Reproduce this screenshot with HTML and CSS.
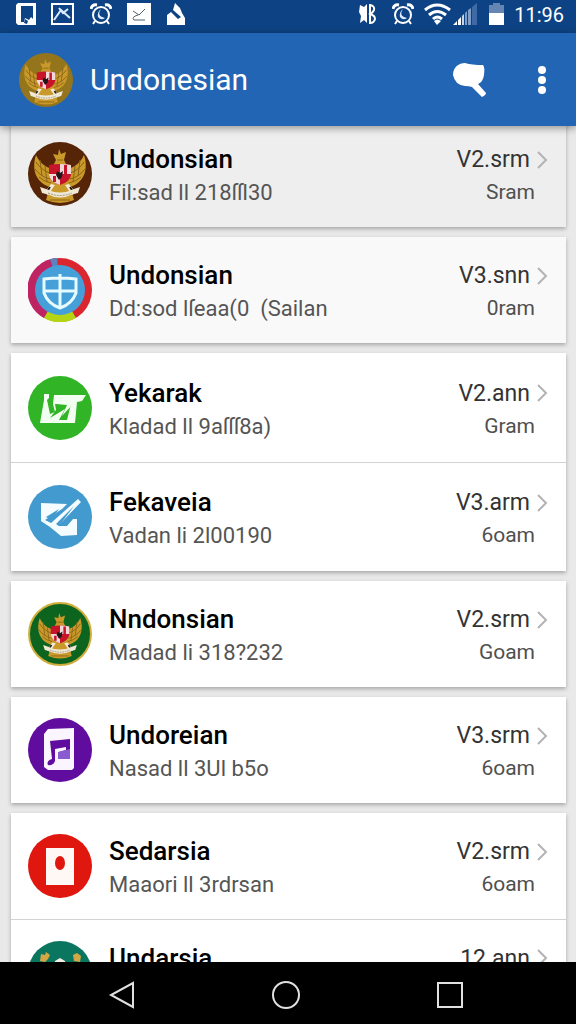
FILE: index.html
```html
<!DOCTYPE html>
<html lang="en">
<head>
  <meta charset="UTF-8">
  <meta name="viewport" content="width=device-width, initial-scale=1.0">
  <title>Undonesian</title>
  <link rel="stylesheet" href="styles.css">
</head>
<body>

  <!-- Shared icon shapes -->
  <svg class="defs" aria-hidden="true">
    <symbol id="garuda" viewBox="0 0 64 64">
      <g fill="#c9992a">
        <path d="M8 13C4 25 6 40 22 45L26 38L24 27C17 25 11 20 8 13Z"/>
        <path d="M56 13C60 25 58 40 42 45L38 38L40 27C47 25 53 20 56 13Z"/>
        <path d="M31 7L33 12L38 10L36 18L39 24H25L28 18L25 12L30 13Z"/>
        <path d="M24 38H40L46 58Q32 64 18 58Z"/>
      </g>
      <g fill="none" stroke="#8a6417" stroke-width="1">
        <path d="M8 20Q13 28 22 31M7 27Q13 35 22 37M11 35Q17 40 23 41M12 18L14 34M17 24L19 40"/>
        <path d="M56 20Q51 28 42 31M57 27Q51 35 42 37M53 35Q47 40 41 41M52 18L50 34M47 24L45 40"/>
        <path d="M22 58H42M29 18H35"/>
      </g>
      <path d="M21 23Q32 21 43 23V33Q42 40 32 43Q22 40 21 33Z" fill="#c8142a"/>
      <path d="M32 22Q38 22 43 23V32H32ZM21 32H32V43Q22 40 21 33Z" fill="#f1d9d9"/>
      <path d="M36 23H39V32H36ZM25 34H28V40H25Z" fill="#c8142a"/>
      <path d="M29 29L32 31L35 29L34 35L31 38L28 33Z" fill="#20141a"/>
      <path d="M23 42L16 51L20 53L27 43ZM41 42L48 51L44 53L37 43Z" fill="#f2ead6"/>
      <path d="M22 45L18 51M42 45L46 51" stroke="#2c1d12" stroke-width="2"/>
      <path d="M12 45L18 47Q32 54 46 47L52 45L50 51L45 52Q32 59 19 52L14 51Z" fill="#efe8d4"/>
      <path d="M20 51Q32 56 44 51" fill="none" stroke="#9d927a" stroke-width="1" stroke-dasharray="2 1"/>
    </symbol>
    <symbol id="alarm" viewBox="0 0 22 22">
      <circle cx="11" cy="12" r="8" fill="none" stroke="#fff" stroke-width="2"/>
      <path d="M1 6Q2 1 7 2M21 6Q20 1 15 2" fill="none" stroke="#fff" stroke-width="3"/>
      <path d="M11 6Q7 12 12 14L15 15Q11 18 8 14Q7 9 11 6Z" fill="#dcecff"/>
      <path d="M5 18L3 21M17 18L19 21" stroke="#fff" stroke-width="2"/>
    </symbol>
    <symbol id="chevron" viewBox="0 0 12 18">
      <path d="M2 1L10 9L2 17" fill="none" stroke="#b3b3b5" stroke-width="2"/>
    </symbol>
  </svg>

  <!-- Status bar -->
  <div class="status-bar">
    <div class="status-left">
      <svg width="20" height="22" viewBox="0 0 20 22"><path fill="#fff" fill-rule="evenodd" d="M2 0H20V22H2L0 20V2ZM5 3V19H8L9 15L13 17L15 14L17 16V3Z"/><path d="M8 20L9 16L12 18L11 21Z" fill="#0d4384"/></svg>
      <svg width="24" height="22" viewBox="0 0 24 22"><rect x="1" y="1" width="21" height="20" fill="none" stroke="#fff" stroke-width="2"/><path d="M3 17L10 7L19 15M8 5L12 10L17 6" fill="none" stroke="#dcecff" stroke-width="2"/></svg>
      <svg width="22" height="22"><use href="#alarm"/></svg>
      <svg width="24" height="22" viewBox="0 0 24 22"><path d="M0 0H24V22H0Z" fill="#fff"/><path d="M6 8L12 12L18 6M11 12Q4 14 7 17H18" fill="none" stroke="#51606f" stroke-width="1"/></svg>
      <svg width="20" height="22" viewBox="0 0 20 22"><path d="M9 0L14 5L16 10L19 15V22H1V12L5 9L12 16L15 14L7 7Z" fill="#fff"/></svg>
    </div>
    <div class="status-right">
      <svg width="20" height="22" viewBox="0 0 20 22"><path d="M2 2L6 4L9 1V20L6 17L2 20L3 13L1 9Z" fill="#fff"/><path d="M12 1V21M12 2Q17 3 16 7Q15 10 11 11Q17 12 17 16Q16 20 12 20" fill="none" stroke="#fff" stroke-width="2"/></svg>
      <svg width="22" height="22"><use href="#alarm"/></svg>
      <svg class="wifi" width="27" height="22" viewBox="0 0 27 22"><g fill="none" stroke="#fff" stroke-width="3"><path d="M1 7Q13 -3 26 7"/><path d="M5 12Q13 5 22 12"/><path d="M9 16Q13 12 18 16"/></g><path d="M10 18Q13 15 17 18L13 22Z" fill="#fff"/></svg>
      <svg class="signal" width="24" height="22" viewBox="0 0 24 22"><path d="M0 22L4 18V22ZM5 17L8 14V22H5Z" fill="#fff"/><path d="M9 13L11 11V22H9Z" fill="#c3d6ec"/><path d="M12 10L14 8V22H12ZM15 7L18 5V22H15Z" fill="#7f9fc9"/><path d="M19 4L24 0V22H19Z" fill="#3f6aa6"/></svg>
      <svg class="battery" width="15" height="22" viewBox="0 0 15 22"><path d="M4 0H11V2H15V10H0V2H4Z" fill="#6585b3"/><path d="M0 10H15V22H0Z" fill="#fff"/></svg>
      <span class="time">11:96</span>
    </div>
  </div>

  <!-- App bar -->
  <header class="app-bar">
    <svg class="app-logo" viewBox="0 0 64 64"><circle cx="32" cy="32" r="32" fill="#94751c"/><use href="#garuda"/></svg>
    <h1>Undonesian</h1>
    <button class="bar-btn search-btn" aria-label="Search">
      <svg width="36" height="36" viewBox="0 0 36 36"><path d="M1 13C1 5 7 1 13 1Q20 3 31 3Q33 5 32 13Q31 20 26 22L34 31Q34 33 30 35L20 25Q17 24 13 24Q3 23 1 13Z" fill="#fff"/></svg>
    </button>
    <button class="bar-btn menu-btn" aria-label="More options">
      <svg width="10" height="30" viewBox="0 0 10 30"><g fill="#fff"><circle cx="5" cy="5" r="4"/><circle cx="5" cy="15" r="4"/><circle cx="5" cy="25" r="4"/></g></svg>
    </button>
  </header>

  <!-- List -->
  <main class="list">
    <section class="card card-dim">
      <a class="row" href="#">
        <svg class="row-icon" viewBox="0 0 64 64"><circle cx="32" cy="32" r="32" fill="#562508"/><use href="#garuda"/></svg>
        <div class="row-text"><h2>Undonsian</h2><p>Fil:sad ll 218ſſl30</p></div>
        <div class="row-meta"><span class="version">V2.srm <svg class="chevron"><use href="#chevron"/></svg></span><span class="size">Sram</span></div>
      </a>
    </section>

    <section class="card card-light">
      <a class="row" href="#">
        <svg class="row-icon" viewBox="0 0 64 64">
          <circle cx="32" cy="32" r="32" fill="#d9262f"/>
          <path d="M32 32L28 0A32 32 0 0 0 16 60Z" fill="#bd2461"/>
          <path d="M32 32L22 1L29 0Z" fill="#5c83bf"/>
          <path d="M32 32L16 60A32 32 0 0 0 48 60Z" fill="#b4d414"/>
          <circle cx="32" cy="32" r="25" fill="#459fd9"/>
          <path d="M16 21Q32 19 48 21V35Q44 46 32 50Q20 46 16 35ZM32 16V50M16 33H48" fill="none" stroke="#e6fbff" stroke-width="3"/>
        </svg>
        <div class="row-text"><h2>Undonsian</h2><p>Dd:sod lſeaa(0 &nbsp;(Sailan</p></div>
        <div class="row-meta"><span class="version">V3.snn <svg class="chevron"><use href="#chevron"/></svg></span><span class="size">0ram</span></div>
      </a>
    </section>

    <section class="card card-tall">
      <a class="row" href="#">
        <svg class="row-icon" viewBox="0 0 64 64"><circle cx="32" cy="32" r="32" fill="#31b526"/><path d="M16 18L21 18V22L19 24L22 38L27 36L25 28L26 19H58L54 25L49 26L47 47H12L16 24Z" fill="#f2fff0"/><path d="M27 28H43L39 44H31L37 33L22 42L28 34Z" fill="#31b526"/><path d="M28 28H45L34 40L39 29Z" fill="#f2fff0"/></svg>
        <div class="row-text"><h2>Yekarak</h2><p>Kladad ll 9aſſſ8a)</p></div>
        <div class="row-meta"><span class="version">V2.ann <svg class="chevron"><use href="#chevron"/></svg></span><span class="size">Gram</span></div>
      </a>
      <a class="row" href="#">
        <svg class="row-icon" viewBox="0 0 64 64"><circle cx="32" cy="32" r="32" fill="#429acf"/><path d="M13 18L39 19L34 24L17 35L23 38L50 14L53 17L30 41H39L45 34H49V50L33 51L22 42L13 36Z" fill="#f4fcff"/><path d="M18 32L31 24L23 35ZM28 39L46 21L31 41Z" fill="#429acf"/></svg>
        <div class="row-text"><h2>Fekaveia</h2><p>Vadan li 2l00190</p></div>
        <div class="row-meta"><span class="version">V3.arm <svg class="chevron"><use href="#chevron"/></svg></span><span class="size">6oam</span></div>
      </a>
    </section>

    <section class="card">
      <a class="row" href="#">
        <svg class="row-icon" viewBox="0 0 64 64"><circle cx="32" cy="32" r="31" fill="#0d641f" stroke="#d0ae3c" stroke-width="2"/><svg x="5" y="5" width="54" height="54"><use href="#garuda"/></svg></svg>
        <div class="row-text"><h2>Nndonsian</h2><p>Madad li 318?232</p></div>
        <div class="row-meta"><span class="version">V2.srm <svg class="chevron"><use href="#chevron"/></svg></span><span class="size">Goam</span></div>
      </a>
    </section>

    <section class="card">
      <a class="row" href="#">
        <svg class="row-icon" viewBox="0 0 64 64"><circle cx="32" cy="32" r="32" fill="#600c9e"/><path d="M20 11L46 10V50L44 52H20L16 49V16Z" fill="#fbf5ff"/><path d="M22 23L42 21V41H31V34L38 32V29L27 31V43Q25 48 20 47Q18 43 24 41Z" fill="#600c9e"/><path d="M30 34L42 31V41H30Z" fill="#8a5bd0"/></svg>
        <div class="row-text"><h2>Undoreian</h2><p>Nasad ll 3Ul b5o</p></div>
        <div class="row-meta"><span class="version">V3.srm <svg class="chevron"><use href="#chevron"/></svg></span><span class="size">6oam</span></div>
      </a>
    </section>

    <section class="card">
      <a class="row" href="#">
        <svg class="row-icon" viewBox="0 0 64 64"><circle cx="32" cy="32" r="32" fill="#df170f"/><rect x="18" y="14" width="28" height="37" fill="#fff8f5"/><ellipse cx="32" cy="29" rx="5" ry="7" fill="#df170f"/></svg>
        <div class="row-text"><h2>Sedarsia</h2><p>Maaori ll 3rdrsan</p></div>
        <div class="row-meta"><span class="version">V2.srm <svg class="chevron"><use href="#chevron"/></svg></span><span class="size">6oam</span></div>
      </a>
      <a class="row" href="#">
        <svg class="row-icon" viewBox="0 0 64 64"><circle cx="32" cy="32" r="32" fill="#0b7660"/><path d="M13 13L17 14L18 11L22 14L20 18L17 21L12 20ZM45 14L49 12L53 15L52 21L46 20Z" fill="#d3a844"/><path d="M27 20L32 17L37 20V34H27Z" fill="#f3eee0"/></svg>
        <div class="row-text"><h2>Undarsia</h2></div>
        <div class="row-meta"><span class="version">12.ann <svg class="chevron"><use href="#chevron"/></svg></span></div>
      </a>
    </section>
  </main>

  <!-- Navigation bar -->
  <nav class="nav-bar">
    <button aria-label="Back"><svg width="28" height="28" viewBox="0 0 28 28"><path d="M25 2V26L3 14Z"/></svg></button>
    <button aria-label="Home"><svg width="28" height="28" viewBox="0 0 28 28"><circle cx="14" cy="14" r="13"/></svg></button>
    <button aria-label="Recent apps"><svg width="28" height="28" viewBox="0 0 28 28"><rect x="2" y="2" width="24" height="24"/></svg></button>
  </nav>

</body>
</html>
```
FILE: styles.css
```css
/* General Styling */
* {
  margin: 0;
  padding: 0;
  box-sizing: border-box;
  font-family: Roboto, "Liberation Sans", sans-serif;
}

body {
  display: flex;
  flex-direction: column;
  height: 100vh;
  overflow: hidden;
  background-color: #e9e9ea;
}

svg {
  display: block;
  flex-shrink: 0;
}

button {
  border: none;
  background: none;
  cursor: pointer;
}

.defs {
  display: none;
}

/* Status bar */
.status-bar {
  display: flex;
  justify-content: space-between;
  height: 33px;
  padding: 3px 12px 0 16px;
  background-color: #0d4384;
  color: white;
  flex-shrink: 0;
}

.status-left,
.status-right {
  display: flex;
  align-items: flex-start;
  gap: 14px;
}

.status-left {
  gap: 15px;
}

.wifi {
  margin-left: -4px;
}

.signal {
  margin-left: -12px;
}

.battery {
  margin-left: -2px;
}

.time {
  margin-left: -4px;
  font-size: 20px;
  line-height: 24px;
}

/* App bar */
.app-bar {
  display: flex;
  align-items: center;
  height: 93px;
  padding: 0 16px 0 19px;
  background-color: #2165b4;
  color: white;
  box-shadow: 0 2px 8px rgba(0, 0, 0, 0.4);
  flex-shrink: 0;
  z-index: 1;
}

.app-logo {
  width: 54px;
  height: 54px;
  margin-right: 17px;
}

.app-bar h1 {
  flex: 1;
  font-size: 30px;
  font-weight: 400;
}

.bar-btn {
  display: flex;
  justify-content: center;
  align-items: center;
  height: 48px;
}

.search-btn {
  width: 48px;
  margin-right: 30px;
}

.menu-btn {
  width: 36px;
}

/* List */
.list {
  flex: 1;
  display: flex;
  flex-direction: column;
  gap: 10px;
  margin-top: -5px;
  padding: 0 10px 0 11px;
  overflow: hidden;
}

.card {
  flex-shrink: 0;
  background-color: white;
  box-shadow: 0 2px 4px rgba(0, 0, 0, 0.28);
}

.card-dim {
  background-color: #eeeeef;
}

.card-light {
  background-color: #f9f9f9;
}

.row {
  display: flex;
  align-items: center;
  height: 106px;
  padding: 0 18px 0 17px;
  color: black;
  text-decoration: none;
}

.card-tall .row {
  height: 109px;
}

.row + .row {
  border-top: 1px solid #d3d3d5;
}

.row-icon {
  width: 64px;
  height: 64px;
  margin-right: 17px;
}

.row-text,
.row-meta {
  min-height: 70px;
  padding-top: 4px;
  line-height: 33px;
}

.row-text {
  flex: 1;
}

.row-text h2 {
  font-size: 26px;
  font-weight: 500;
}

.row-text p {
  font-size: 22px;
  color: #555;
}

.row-meta {
  display: flex;
  flex-direction: column;
  align-items: flex-end;
}

.version {
  display: flex;
  align-items: center;
  gap: 6px;
  font-size: 23px;
  color: #333;
}

.chevron {
  width: 12px;
  height: 18px;
}

.size {
  margin-right: 13px;
  font-size: 21px;
  color: #505050;
}

/* Navigation bar */
.nav-bar {
  display: flex;
  justify-content: center;
  align-items: center;
  gap: 116px;
  height: 62px;
  padding: 4px 4px 0 0;
  background-color: black;
  flex-shrink: 0;
  z-index: 1;
}

.nav-bar button {
  display: flex;
  justify-content: center;
  align-items: center;
  width: 48px;
  height: 48px;
}

.nav-bar svg {
  fill: none;
  stroke: #e0e0e0;
  stroke-width: 2;
}
```
